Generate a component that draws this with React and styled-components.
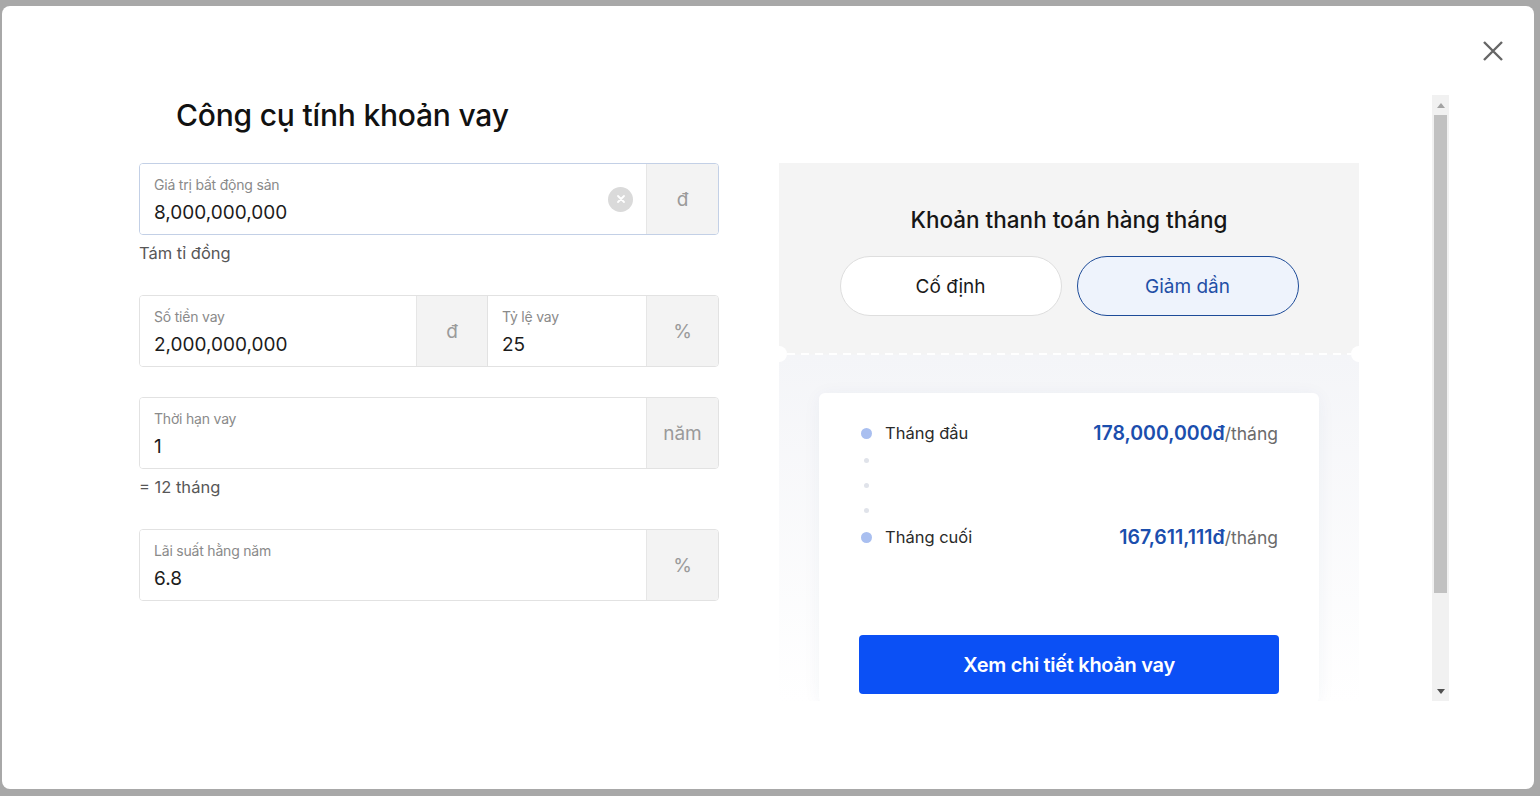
import styled, { createGlobalStyle } from 'styled-components';

const GlobalStyle = createGlobalStyle`
	html, body {
		margin: 0;
		padding: 0;
		background: #a8a8a8;
		font-family: Inter, "Noto Sans", sans-serif;
		color: #1f1f1f;
	}
	* {
		box-sizing: border-box;
	}
`;

const Modal = styled.div`
	position: relative;
	width: 1532px;
	height: 783px;
	margin: 6px 6px 7px 2px;
	padding-top: 89px;
	background: #fff;
	border-radius: 8px;
`;

const CloseButton = styled.button`
	position: absolute;
	top: 34px;
	right: 30px;
	width: 22px;
	height: 22px;
	padding: 0;
	border: none;
	background: none;
	cursor: pointer;

	svg {
		display: block;
	}
`;

const Body = styled.div`
	display: flex;
	width: 1447px;
	height: 606px;
`;

const Viewport = styled.div`
	flex: 1;
	overflow: hidden;
	padding-left: 137px;
`;

const Title = styled.h1`
	margin: 0 0 28px 37px;
	font-size: 30px;
	line-height: 40px;
	font-weight: 500;
	color: #111;
	letter-spacing: -0.2px;
`;

const Columns = styled.div`
	display: flex;
	gap: 60px;
	align-items: flex-start;
`;

const LeftColumn = styled.div`
	width: 580px;
	display: flex;
	flex-direction: column;
`;

const FieldBox = styled.div`
	display: flex;
	height: 72px;
	border: 1px solid ${(p) => (p.focused ? '#c3d0e6' : '#e2e2e2')};
	border-radius: 4px;
	overflow: hidden;
	margin-top: ${(p) => p.gapTop || 0}px;
`;

const InputPart = styled.div`
	flex: ${(p) => (p.w ? `0 0 ${p.w}px` : '1')};
	display: flex;
	align-items: center;
	padding: 0 13px 0 14px;
	background: #fff;
	border-left: ${(p) => (p.divider ? '1px solid #e2e2e2' : 'none')};
`;

const InputText = styled.div`
	flex: 1;
	display: flex;
	flex-direction: column;
	gap: 6px;
	padding-top: 1px;
`;

const Label = styled.span`
	font-size: 14px;
	line-height: 20px;
	color: #8a8a8a;
	letter-spacing: -0.2px;
`;

const Value = styled.span`
	font-size: 19px;
	line-height: 24px;
	color: #1c1c1c;
`;

const ClearIcon = styled.span`
	width: 25px;
	height: 25px;
	border-radius: 50%;
	background: #dadada;
	display: flex;
	align-items: center;
	justify-content: center;
`;

const Unit = styled.div`
	width: ${(p) => p.w || 72}px;
	display: flex;
	align-items: center;
	justify-content: center;
	background: #f3f3f3;
	border-left: 1px solid #e6e6e6;
	font-size: 19px;
	color: #9a9a9a;
`;

const Helper = styled.div`
	margin-top: 7px;
	font-size: 16.5px;
	line-height: 22px;
	color: #575757;
`;

const RightPanel = styled.div`
	width: 580px;
	height: 540px;
	background: linear-gradient(180deg, #f4f4f4 0, #f4f4f4 191px, #f4f5f8 192px, #ffffff 540px);
	display: flex;
	flex-direction: column;
	align-items: center;
`;

const PanelHeading = styled.h2`
	margin: 42px 0 21px;
	font-size: 22.5px;
	line-height: 30px;
	font-weight: 500;
	color: #161616;
`;

const Toggle = styled.div`
	display: flex;
	gap: 15px;
`;

const ToggleButton = styled.button`
	width: 222px;
	height: 60px;
	border-radius: 30px;
	border: 1px solid ${(p) => (p.active ? '#1d4b98' : '#dedede')};
	background: ${(p) => (p.active ? '#eef3fc' : '#fff')};
	color: ${(p) => (p.active ? '#1f4fa6' : '#1a1a1a')};
	font-family: inherit;
	font-size: 19px;
	cursor: pointer;
`;

const Divider = styled.div`
	position: relative;
	width: 100%;
	height: 16px;
	margin-top: 30px;
	display: flex;
	align-items: center;
	padding: 0 8px;

	&::before,
	&::after {
		content: '';
		position: absolute;
		top: 0;
		width: 16px;
		height: 16px;
		border-radius: 50%;
		background: #fff;
	}
	&::before {
		left: -8px;
	}
	&::after {
		right: -8px;
	}
`;

const Dashes = styled.div`
	flex: 1;
	height: 2px;
	background: repeating-linear-gradient(90deg, #fff 0 8px, transparent 8px 14px);
`;

const Card = styled.div`
	width: 500px;
	margin-top: 31px;
	padding: 28px 41px 0 42px;
	background: #fff;
	border-radius: 6px;
	box-shadow: 0 2px 18px rgba(40, 60, 110, 0.05);
	flex: 1;
	display: flex;
	flex-direction: column;
`;

const PayRow = styled.div`
	display: flex;
	align-items: center;
	height: 24px;
`;

const Dot = styled.span`
	width: 11px;
	height: 11px;
	border-radius: 50%;
	background: #a9bff0;
	margin-right: 13px;
`;

const RowLabel = styled.span`
	flex: 1;
	font-size: 16.5px;
	color: #2a2a2a;
`;

const Amount = styled.span`
	font-size: 19.5px;
	font-weight: 600;
	color: #1b4ead;
`;

const PerMonth = styled.span`
	font-size: 17.5px;
	color: #6b6b6b;
`;

const SmallDots = styled.div`
	display: flex;
	flex-direction: column;
	gap: 20px;
	padding: 12.5px 0 12.5px 3px;

	span {
		width: 5px;
		height: 5px;
		border-radius: 50%;
		background: #e0e3ea;
	}
`;

const PrimaryButton = styled.button`
	margin-top: 86px;
	width: 420px;
	height: 59px;
	align-self: center;
	margin-left: -1px;
	border: none;
	border-radius: 4px;
	background: #0b50f5;
	color: #fff;
	font-family: inherit;
	font-size: 20px;
	font-weight: 600;
	letter-spacing: -0.3px;
	cursor: pointer;
`;

const ScrollTrack = styled.div`
	width: 17px;
	background: #f1f1f1;
	display: flex;
	flex-direction: column;
`;

const ScrollArrow = styled.div`
	height: 20px;
	display: flex;
	align-items: center;
	justify-content: center;
`;

const ScrollThumb = styled.div`
	height: 478px;
	margin: 0 2px;
	background: #c1c1c1;
`;

const ScrollSpace = styled.div`
	flex: 1;
`;

const Field = ({ label, value, unit, focused, clear, gapTop }) => (
	<FieldBox focused={focused} gapTop={gapTop}>
		<InputPart>
			<InputText>
				<Label>{label}</Label>
				<Value>{value}</Value>
			</InputText>
			{clear && (
				<ClearIcon>
					<svg width="10" height="10" viewBox="0 0 10 10">
						<path d="M2 2l6 6M8 2l-6 6" stroke="#fff" strokeWidth="1.8" strokeLinecap="round" />
					</svg>
				</ClearIcon>
			)}
		</InputPart>
		<Unit>{unit}</Unit>
	</FieldBox>
);

const App = () => {
	return (
		<>
			<GlobalStyle />
			<Modal>
				<CloseButton aria-label="Đóng">
					<svg width="22" height="22" viewBox="0 0 22 22">
						<path d="M2 2l18 18M20 2L2 20" stroke="#666" strokeWidth="2.4" />
					</svg>
				</CloseButton>
				<Body>
					<Viewport>
						<Title>Công cụ tính khoản vay</Title>
						<Columns>
							<LeftColumn>
								<Field label="Giá trị bất động sản" value="8,000,000,000" unit="đ" focused clear />
								<Helper>Tám tỉ đồng</Helper>

								<FieldBox gapTop={31}>
									<InputPart w={276}>
										<InputText>
											<Label>Số tiền vay</Label>
											<Value>2,000,000,000</Value>
										</InputText>
									</InputPart>
									<Unit w={71}>đ</Unit>
									<InputPart divider>
										<InputText>
											<Label>Tỷ lệ vay</Label>
											<Value>25</Value>
										</InputText>
									</InputPart>
									<Unit>%</Unit>
								</FieldBox>

								<Field label="Thời hạn vay" value="1" unit="năm" gapTop={30} />
								<Helper>= 12 tháng</Helper>

								<Field label="Lãi suất hằng năm" value="6.8" unit="%" gapTop={31} />
							</LeftColumn>

							<RightPanel>
								<PanelHeading>Khoản thanh toán hàng tháng</PanelHeading>
								<Toggle>
									<ToggleButton>Cố định</ToggleButton>
									<ToggleButton active>Giảm dần</ToggleButton>
								</Toggle>
								<Divider>
									<Dashes />
								</Divider>
								<Card>
									<PayRow>
										<Dot />
										<RowLabel>Tháng đầu</RowLabel>
										<Amount>178,000,000đ</Amount>
										<PerMonth>/tháng</PerMonth>
									</PayRow>
									<SmallDots>
										<span />
										<span />
										<span />
									</SmallDots>
									<PayRow>
										<Dot />
										<RowLabel>Tháng cuối</RowLabel>
										<Amount>167,611,111đ</Amount>
										<PerMonth>/tháng</PerMonth>
									</PayRow>
									<PrimaryButton>Xem chi tiết khoản vay</PrimaryButton>
								</Card>
							</RightPanel>
						</Columns>
					</Viewport>
					<ScrollTrack>
						<ScrollArrow>
							<svg width="8" height="5" viewBox="0 0 8 5">
								<path d="M0 5L4 0l4 5z" fill="#a3a3a3" />
							</svg>
						</ScrollArrow>
						<ScrollThumb />
						<ScrollSpace />
						<ScrollArrow>
							<svg width="8" height="5" viewBox="0 0 8 5">
								<path d="M0 0l4 5 4-5z" fill="#505050" />
							</svg>
						</ScrollArrow>
					</ScrollTrack>
				</Body>
			</Modal>
		</>
	);
};

export default App;
